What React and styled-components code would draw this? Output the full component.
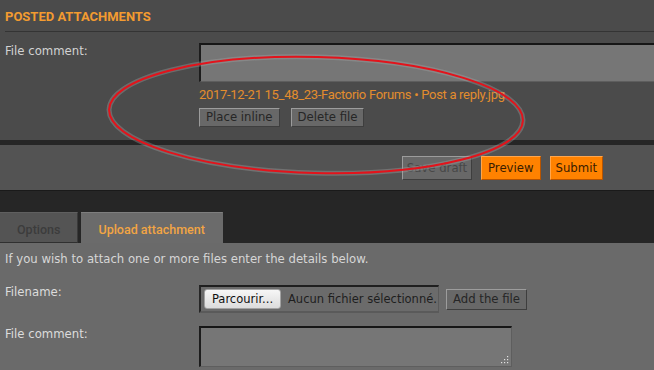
import React from 'react';
import styled, { createGlobalStyle } from 'styled-components';

const BODY = `"DejaVu Sans", Verdana, sans-serif`;
const TITLE = `Roboto, "Noto Sans", sans-serif`;

const Global = createGlobalStyle`
  html, body { margin: 0; padding: 0; background: #262626; }
  body { width: 654px; height: 370px; overflow: hidden; font-family: ${BODY}; font-size: 11.7px; }
  * { box-sizing: border-box; }
`;

const Page = styled.div`
  position: relative;
  width: 654px;
  height: 370px;
  overflow: hidden;
  background: #262626;
  display: flex;
  flex-direction: column;
`;

const AttachPanel = styled.section`
  background: #4b4b4b;
  height: 140px;
  padding-left: 5px;
  flex: none;
`;

const Heading = styled.h3`
  margin: 0;
  padding-top: 8px;
  height: 32px;
  border-bottom: 1px solid #343434;
  font-family: ${TITLE};
  font-weight: 700;
  font-size: 13px;
  line-height: 18px;
  color: #f39b30;
  letter-spacing: 0;
`;

const FormRow = styled.div`
  display: grid;
  grid-template-columns: 194px 1fr;
  align-items: start;
  margin-top: ${p => p.$top || 0}px;
`;

const Label = styled.label`
  display: block;
  margin-top: ${p => p.$offset || 0}px;
  line-height: 15px;
  color: ${p => p.$light ? '#dcdcdc' : '#d2d2d2'};
  font-size: 11.7px;
`;

const FieldCol = styled.div`
  display: flex;
  flex-direction: column;
  align-items: flex-start;
  min-width: 0;
`;

const TextBoxWrap = styled.div`
  position: relative;
  width: ${p => p.$w}px;
  height: ${p => p.$h}px;
  flex: none;
`;

const TextBox = styled.textarea`
  display: block;
  width: 100%;
  height: 100%;
  margin: 0;
  resize: none;
  background: #767676;
  border-style: solid;
  border-width: 2px 1px 1px 2px;
  border-color: #161616 #5e5e5e #5e5e5e #1c1c1c;
  outline: none;
`;

const Grip = styled.svg`
  position: absolute;
  right: 3px;
  bottom: 3px;
  width: 9px;
  height: 9px;
`;

const FileLink = styled.a`
  display: block;
  margin-top: 5px;
  font-family: ${TITLE};
  font-size: 13px;
  line-height: 16px;
  letter-spacing: -0.3px;
  color: #e38d2d;
  text-decoration: none;
  white-space: nowrap;
`;

const ButtonRow = styled.div`
  display: flex;
  gap: ${p => p.$gap || 11}px;
  margin-top: ${p => p.$top || 0}px;
  align-items: center;
`;

const Button = styled.button`
  margin: 0;
  height: ${p => p.$h || 19}px;
  padding: 0 ${p => p.$pad ?? 6}px;
  font-family: ${BODY};
  font-size: 11.7px;
  line-height: ${p => (p.$h || 19) - 4}px;
  border: 1px solid;
  border-radius: 0;
  cursor: pointer;
  white-space: nowrap;
  background: ${p => p.$primary ? '#ff8200' : '#686868'};
  border-color: ${p => p.$primary
    ? '#ffa64d #b85400 #b85400 #ffa64d'
    : '#9c9c9c #3e3e3e #3e3e3e #9c9c9c'};
  color: ${p => p.$primary ? '#3a1c00' : p.disabled ? '#474747' : '#262626'};
`;

const ActionBand = styled.div`
  flex: none;
  margin-top: 5px;
  background: #535353;
  border-bottom: 1px solid #1a1a1a;
  padding: 11px 51px 10px 0;
  display: flex;
  justify-content: flex-end;
  gap: 9px;
`;

const TabBar = styled.div`
  flex: none;
  display: flex;
  gap: 3px;
  margin-top: 21px;
  height: 31px;
`;

const Tab = styled.div`
  height: 31px;
  padding: 2px 17px 0;
  line-height: 29px;
  font-family: ${TITLE};
  font-size: 12.5px;
  font-weight: 500;
  white-space: nowrap;
  color: ${p => p.$active ? '#f2a544' : '#3c3c3c'};
  background: ${p => p.$active ? '#6b6b6b' : '#545454'};
  border-top: 1px solid ${p => p.$active ? '#7e7e7e' : '#5f5f5f'};
  border-right: 1px solid ${p => p.$active ? '#6b6b6b' : '#3a3a3a'};
  border-bottom: ${p => p.$active ? 'none' : '1px solid #303030'};
`;

const UploadPanel = styled.section`
  flex: 1;
  background: #6a6a6a;
  padding: 9px 0 0 5px;
`;

const Intro = styled.p`
  margin: 0;
  line-height: 15px;
  color: #d6d6d6;
`;

const FileBox = styled.div`
  width: 240px;
  height: 28px;
  display: flex;
  align-items: center;
  gap: 7px;
  padding-left: 3px;
  background: #6b6b6b;
  border-style: solid;
  border-width: 2px 1px 2px 2px;
  border-color: #1f1f1f #5a5a5a #5a5a5a #262626;
  overflow: hidden;
  white-space: nowrap;
`;

const BrowseButton = styled.button`
  flex: none;
  margin: 0;
  width: 77px;
  height: 20px;
  padding: 0;
  font-family: ${BODY};
  font-size: 11.5px;
  color: #111;
  background: linear-gradient(#f6f6f6, #dcdcdc);
  border: 1px solid #a3a3a3;
  border-radius: 3px;
`;

const NoFile = styled.span`
  font-size: 11.5px;
  color: #1e1e1e;
`;

const FileLine = styled.div`
  display: flex;
  align-items: center;
  gap: 7px;
`;

const Overlay = styled.svg`
  position: absolute;
  left: 0;
  top: 0;
  width: 654px;
  height: 370px;
  pointer-events: none;
`;

function Textarea({ w, h, grip }) {
  return (
    <TextBoxWrap $w={w} $h={h}>
      <TextBox />
      {grip && (
        <Grip viewBox="0 0 9 9">
          <g fill="#e2e2e2">
            <rect x="7" y="1" width="1.2" height="1.2" />
            <rect x="4" y="4" width="1.2" height="1.2" />
            <rect x="7" y="4" width="1.2" height="1.2" />
            <rect x="1" y="7" width="1.2" height="1.2" />
            <rect x="4" y="7" width="1.2" height="1.2" />
            <rect x="7" y="7" width="1.2" height="1.2" />
          </g>
        </Grip>
      )}
    </TextBoxWrap>
  );
}

export default function App() {
  return (
    <>
      <Global />
      <Page>
        <AttachPanel>
          <Heading>POSTED ATTACHMENTS</Heading>
          <FormRow $top={11}>
            <Label $offset={1}>File comment:</Label>
            <FieldCol>
              <Textarea w={470} h={39} />
              <FileLink href="#">2017-12-21 15_48_23-Factorio Forums • Post a reply.jpg</FileLink>
              <ButtonRow $top={5}>
                <Button>Place inline</Button>
                <Button>Delete file</Button>
              </ButtonRow>
            </FieldCol>
          </FormRow>
        </AttachPanel>

        <ActionBand>
          <Button $h={24} $pad={4} disabled>Save draft</Button>
          <Button $h={24} $pad={6} $primary>Preview</Button>
          <Button $h={24} $pad={5} $primary>Submit</Button>
        </ActionBand>

        <TabBar>
          <Tab>Options</Tab>
          <Tab $active>Upload attachment</Tab>
        </TabBar>

        <UploadPanel>
          <Intro>If you wish to attach one or more files enter the details below.</Intro>
          <FormRow $top={18}>
            <Label $light>Filename:</Label>
            <FileLine>
              <FileBox>
                <BrowseButton>Parcourir...</BrowseButton>
                <NoFile>Aucun fichier sélectionné.</NoFile>
              </FileBox>
              <Button $h={21}>Add the file</Button>
            </FileLine>
          </FormRow>
          <FormRow $top={13}>
            <Label $light $offset={1}>File comment:</Label>
            <Textarea w={313} h={41} grip />
          </FormRow>
        </UploadPanel>

        <Overlay viewBox="0 0 654 370">
          <g transform="rotate(1.5 316 115)">
            <ellipse cx="316" cy="115" rx="207" ry="58" fill="none" stroke="rgba(170,170,170,0.35)" strokeWidth="5" />
            <ellipse cx="316" cy="115" rx="207" ry="58" fill="none" stroke="#e3131b" strokeWidth="2" />
          </g>
        </Overlay>
      </Page>
    </>
  );
}
